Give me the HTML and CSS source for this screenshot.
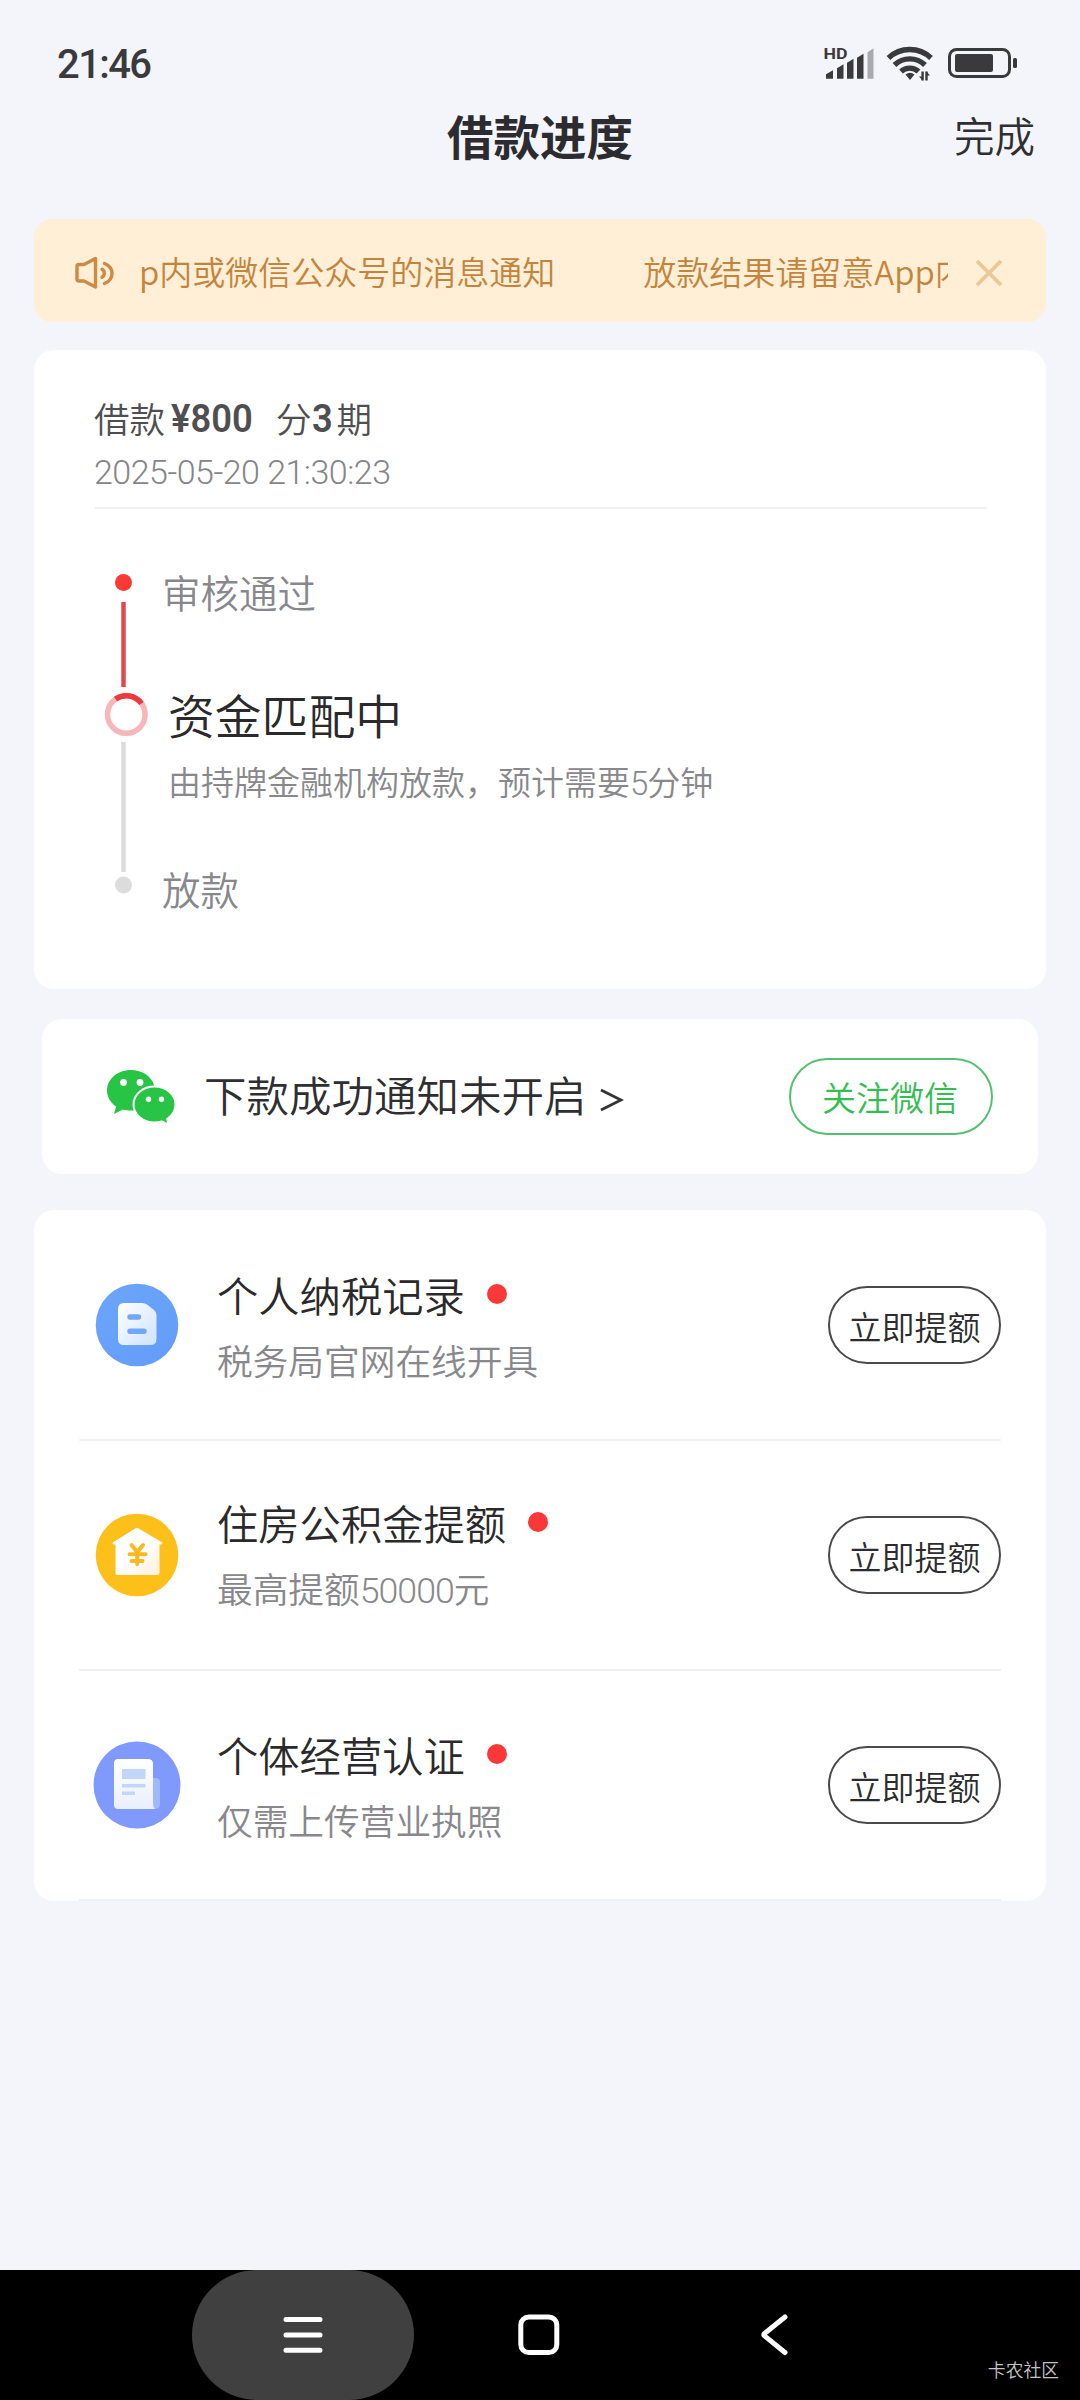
FILE: index.html
```html
<!DOCTYPE html>
<html lang="zh-CN">
<head>
<meta charset="utf-8">
<title>借款进度</title>
<link rel="stylesheet" href="styles.css">
</head>
<body>
<div class="screen">
  <header class="status">
    <span class="clock">21:46</span>
    <svg class="status-icons" width="196" height="40" viewBox="822 44 196 40">
      <text class="hd" x="823.500" y="59" textLength="24" lengthAdjust="spacingAndGlyphs">HD</text>
      <g fill="#3a3a3c">
        <path d="M826 78.800v-4.500l7-4v8.500z"/><path d="M837 78.800v-10.500l6.500-4v14.500z"/><path d="M847 78.800v-16l6.500-4v20z"/><path d="M857 78.800v-21l6.500-4v25z"/>
        <path fill="#a9a9af" d="M867.500 78.800v-26.500l6-4v30.500z"/>
      </g>
      <g fill="none" stroke="#3a3a3c" stroke-width="5.400">
        <path d="M888.500 58a31 31 0 0 1 42.500 0"/><path d="M894.500 65a22 22 0 0 1 30.500 0"/><path d="M901 71.500a13 13 0 0 1 17.500 0"/>
      </g>
      <path fill="#3a3a3c" d="M905.500 74.500q4.500-3.500 9 0l-4.500 5.500zM922.500 71.500v9l-3.500-4h3.500M926.500 80.500v-9l3.500 4h-3.500"/>
      <path d="M922.600 71.500v9M926.500 80.500v-9" stroke="#3a3a3c" stroke-width="2.400"/>
      <rect x="949.500" y="49.500" width="60" height="27" rx="7" fill="none" stroke="#3a3a3c" stroke-width="3"/>
      <rect x="955" y="54" width="38" height="18" rx="2" fill="#3a3a3c"/>
      <rect x="1013" y="58" width="4" height="10" rx="1.500" fill="#3a3a3c"/>
    </svg>
  </header>
  <nav class="topbar"><h1>借款进度</h1><a class="done">完成</a></nav>

  <section class="notice">
    <svg width="40" height="34" viewBox="75 257 40 34" fill="none" stroke="#cc8a45" stroke-width="3.400" stroke-linejoin="round" stroke-linecap="round">
      <path d="M84 265.500h-5q-2 0-2 2v12.500q0 2 2 2h5l11.500 6v-28.500z"/><path d="M102 270.300a4.600 4.600 0 0 1 0 8"/><path d="M104.500 264.500q7.500 3 7.500 10t-7.500 10"/>
    </svg>
    <div class="marquee"><span>p内或微信公众号的消息通知</span><span>放款结果请留意App内</span></div>
    <svg class="close" width="28" height="28" viewBox="0 0 28 28" fill="none" stroke="#edc796" stroke-width="3.800"><path d="M2 2l24 24M26 2L2 26"/></svg>
  </section>

  <section class="card loan">
    <div class="loan-head">
      <div class="amount"><span>借款</span><b class="money">¥800</b><span class="fen">分</span><b class="count">3</b><span>期</span></div>
      <div class="date">2025-05-20 21:30:23</div>
    </div>
    <div class="progress">
      <svg class="track" width="46" height="340" viewBox="104 560 46 340">
        <circle cx="123.500" cy="582.500" r="8.500" fill="#fb3a36"/>
        <path d="M123.500 602v85" stroke="#e5484a" stroke-width="4.500"/>
        <circle cx="126.300" cy="714.500" r="18.800" fill="none" stroke="#f8b6b8" stroke-width="5.500"/>
        <path d="M115.500 699.100A18.800 18.800 0 0 1 141.500 703.500" fill="none" stroke="#ec3a3e" stroke-width="5.500"/>
        <path d="M123.500 742v130" stroke="#dcdcdd" stroke-width="4.500"/>
        <circle cx="123.500" cy="885" r="8.500" fill="#dcdcdd"/>
      </svg>
      <div class="steps">
        <p class="step">审核通过</p>
        <p class="current">资金匹配中</p>
        <p class="hint">由持牌金融机构放款，预计需要<span class="num">5</span>分钟</p>
        <p class="step last">放款</p>
      </div>
    </div>
  </section>

  <section class="card wechat">
    <svg width="70" height="56" viewBox="106 1068 70 56">
      <path fill="#28c445" d="M131 1069c-13.500 0-24 9-24 20.500 0 6.500 3.500 12 9 16l-2 7.500 9-4.500c2.500.7 5 1.100 8 1.100 13.500 0 24-9 24-20.100S144.500 1069 131 1069z"/>
      <path fill="#28c445" stroke="#fff" stroke-width="2" d="M154.500 1085.500c-11.500 0-21 8-21 18s9.500 18 21 18c2.600 0 5-.4 7.300-1.100l6.700 3.600-1.300-6c5-3.500 8.300-8.500 8.300-14.500 0-10-9.500-18-21-18z"/>
      <g fill="#fff"><circle cx="123.500" cy="1081.500" r="3.400"/><circle cx="140" cy="1081.500" r="3.400"/><circle cx="148.500" cy="1098.300" r="2.700"/><circle cx="161.500" cy="1098.300" r="2.700"/></g>
    </svg>
    <span class="wx-text">下款成功通知未开启</span>
    <svg class="arrow" width="24" height="24" viewBox="0 0 24 24" fill="none" stroke="#333" stroke-width="2.800"><path d="M1 2l20 10L1 22"/></svg>
    <button class="pill green">关注微信</button>
  </section>

  <section class="card offers">
    <div class="offer">
      <svg class="icon" width="88" height="88" viewBox="-44 -44 88 88">
        <defs><linearGradient id="a" x1="0" y1="0" x2="1" y2="1"><stop offset="0" stop-color="#fff"/><stop offset="1" stop-color="#cfe2ff"/></linearGradient><linearGradient id="blue" x1="0" y1="0" x2="1" y2="1"><stop offset="0" stop-color="#6ba6fa"/><stop offset="1" stop-color="#629cf9"/></linearGradient></defs>
        <circle r="41.300" fill="url(#blue)"/>
        <path fill="url(#a)" d="M-13-22H5q3 0 5 1.500l7 5.500q2.500 2 2.500 5V14q0 6-6 6h-26.500q-6 0-6-6v-30q0-6 6-6z"/>
        <path d="M-7-8H1.500M-7 6.300H7" stroke="#70a7f8" stroke-width="5.400" stroke-linecap="round"/>
      </svg>
      <div class="info"><h2>个人纳税记录<i></i></h2><p>税务局官网在线开具</p></div>
      <button class="pill">立即提额</button>
    </div>
    <div class="offer">
      <svg class="icon" width="88" height="88" viewBox="-44 -44 88 88">
        <defs><linearGradient id="b" x1="0" y1="0" x2="1" y2="1"><stop offset=".5" stop-color="#fff"/><stop offset="1" stop-color="#ffefd6"/></linearGradient></defs>
        <circle r="41.300" fill="#fdc01b"/>
        <path fill="url(#b)" d="M-2.500-26q2.500-2 5 0L24.500-13q2 2.500-1 2.500h-1V18q0 2-2 2h-40q-2 0-2-2v-28.500h-1q-3 0-1-2.500z"/>
        <path d="M-5.500-10L.2-3 6-10M.2-3V9M-7.500-.8H8.500M-5.500 6H5.500" fill="none" stroke="#fbb921" stroke-width="4" stroke-linecap="round"/>
      </svg>
      <div class="info"><h2>住房公积金提额<i></i></h2><p>最高提额<span class="num">50000</span>元</p></div>
      <button class="pill">立即提额</button>
    </div>
    <div class="offer">
      <svg class="icon" width="88" height="88" viewBox="-44 -44 88 88">
        <defs><linearGradient id="c" x1="0" y1="0" x2="0" y2="1"><stop offset="0" stop-color="#fff"/><stop offset="1" stop-color="#e9effd"/></linearGradient></defs>
        <circle r="43.500" fill="#7f99fc"/>
        <path d="M15-7h4q4 0 4 4v22q0 5-5 5h-6z" fill="#a1b8fb"/>
        <path fill="url(#c)" d="M-19-26H11q5 0 5 5V19q0 3 2 5h-37q-4 0-4-4v-42q0-4 4-4z"/>
        <path d="M-15-16H8.500V-6H-15zM-15-1H8.500V2.500H-15zM-15 6.500H-2V10H-15z" fill="#c3d5f8"/>
      </svg>
      <div class="info"><h2>个体经营认证<i></i></h2><p>仅需上传营业执照</p></div>
      <button class="pill">立即提额</button>
    </div>
  </section>

  <footer class="navbar">
    <div class="nav-hit active"><svg width="44" height="44" viewBox="0 0 44 44" fill="none" stroke="#fff" stroke-width="5" stroke-linecap="round"><path d="M5 6.500h34M5 22h34M5 37.300h34"/></svg></div>
    <div class="nav-hit"><svg width="44" height="44" viewBox="0 0 44 44" fill="none" stroke="#fff" stroke-width="5"><rect x="4.800" y="4" width="36" height="35.500" rx="8"/></svg></div>
    <div class="nav-hit"><svg width="44" height="44" viewBox="0 0 44 44" fill="none" stroke="#fff" stroke-width="5" stroke-linecap="round" stroke-linejoin="round"><path d="M34 4L13.500 20.500q-1.500 1.200 0 2.400L34 39.500"/></svg></div>
    <span class="mark">卡农社区</span>
  </footer>
</div>
</body>
</html>
```
FILE: styles.css
```css
* { box-sizing: border-box; margin: 0; padding: 0; }
body {
  background: #f4f5fa;
  font-family: "Noto Sans CJK SC", sans-serif;
  font-weight: 350;
  color: #2f2f31;
}
svg { display: block; flex: none; }
.screen { width: 1080px; height: 2400px; display: flex; flex-direction: column; white-space: nowrap; overflow: hidden; }
.status { height: 100px; padding: 44px 62px 0 57px; display: flex; justify-content: space-between; align-items: flex-start; }
.clock { font: 500 40px/41px Roboto, sans-serif; letter-spacing: -1.6px; color: #3a3a3c; }
.hd { font: 700 15px Roboto, sans-serif; fill: #3a3a3c; }
.topbar { height: 68px; display: grid; grid-template-columns: 1fr auto 1fr; align-items: center; padding-right: 45px; padding-left: 45px; }
.topbar h1 { grid-column: 2; font-size: 46.5px; line-height: 68px; font-weight: 700; color: #2c2c30; }
.done { justify-self: end; font-size: 40.5px; font-weight: 350; line-height: 68px; padding-top: 1px; }

.notice { margin: 51px 34px 0; height: 103px; border-radius: 18px; background: #ffefd6; display: flex; align-items: center; padding: 4px 43px 0 41px; }
.marquee { margin-left: 24px; width: 809px; overflow: hidden; display: flex; gap: 88px; font-size: 33px; line-height: 56px; padding-bottom: 3px; font-weight: 350; color: #c4843c; }
.close { margin-left: auto; }

.card { background: #fff; border-radius: 20px; margin: 0 34px; }
.loan { margin-top: 28px; height: 639px; padding: 0 59px 0 60px; }
.loan-head { height: 159px; border-bottom: 2px solid #f1f1f3; padding-top: 40px; }
.amount { display: flex; align-items: center; font-size: 35.500px; line-height: 50px; font-weight: 350; color: #4f4f52; }
.amount b { font-family: Roboto, sans-serif; font-weight: 600; font-size: 39.500px; line-height: 54px; padding-top: 2px; transform: scaleX(.92); transform-origin: left; }
.money { margin-left: 6px; width: 81px; }
.fen { margin-left: 24px; }
.count { width: 25px; }
.date { font: 300 34px/52px Roboto, sans-serif; letter-spacing: -.5px; color: #858589; }
.progress { display: flex; padding-top: 51px; padding-left: 10px; }
.steps { padding-left: 12px; color: #88888c; }
.step { font-size: 38.500px; line-height: 62px; }
.current { font-size: 46.800px; line-height: 70px; margin: 57px 0 0 6px; font-weight: 350; color: #2a2a2c; }
.hint { font-size: 33px; line-height: 60px; margin: 2px 0 0 6px; }
.num { font-family: Roboto, sans-serif; font-weight: 300; letter-spacing: -1px; }
.last { margin-top: 43px; }

.wechat { margin: 30px 42px 0; height: 155px; padding: 0 45px 0 64px; display: flex; align-items: center; }
.wx-text { margin-left: 28px; font-size: 42.500px; padding-bottom: 6px; }
.arrow { margin: 6px 0 0 13px; }
.pill { width: 173px; height: 78px; border: 2px solid #4a4a4c; border-radius: 39px; background: none; font: 350 33px/72px "Noto Sans CJK SC", sans-serif; padding-top: 2px; color: #2c2c2e; margin-left: auto; }
.pill.green { width: 204px; height: 77px; border-color: #55c070; color: #34bd52; font-size: 34px; padding: 0 2px 0 0; }

.offers { margin-top: 36px; height: 691px; padding: 1px 45px 0; }
.offer { height: 230px; border-bottom: 2px solid #f1f1f2; display: flex; align-items: center; padding-left: 14px; }
.info { margin-left: 36px; padding-top: 5px; }
.info h2 { font-size: 41.300px; line-height: 62px; font-weight: 350; display: flex; align-items: center; color: #2a2a2c; }
.info i { width: 20px; height: 20px; border-radius: 50%; background: #fb3838; margin-left: 22px; }
.info p { font-size: 35.700px; line-height: 66px; padding-top: 2px; color: #88888c; }

.navbar { margin-top: auto; height: 130px; background: #000; display: flex; padding-left: 192px; position: relative; gap: 13px; }
.nav-hit { width: 222px; height: 130px; border-radius: 65px; display: flex; align-items: center; justify-content: center; }
.active { background: #404040; }
.mark { position: absolute; right: 21px; bottom: 17px; font-size: 17.800px; line-height: 28px; font-weight: 350; color: #c4c4c4; }
```
